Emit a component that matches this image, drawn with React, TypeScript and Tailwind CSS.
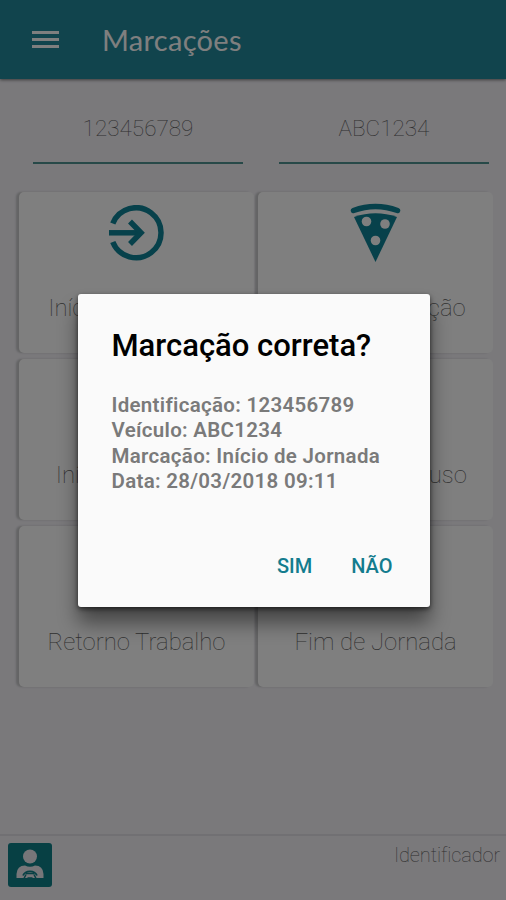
import type { ReactNode } from "react";

function EnterIcon() {
  return (
    <svg width="56" height="56" viewBox="0 0 56 56" fill="none" stroke="#0e8296" strokeWidth="5.5">
      <path d="M3.8 18.5A25 25 0 1 1 3.8 37" />
      <path d="M0 27.8H32" />
      <path d="M21 16.5L32 27.8L21 39" />
    </svg>
  );
}

function PizzaIcon() {
  return (
    <svg width="52" height="60" viewBox="0 0 52 60">
      <path d="M3.5 7.5Q25.500 -0.5 47.500 7.5" fill="none" stroke="#0e8296" strokeWidth="5.5" strokeLinecap="round" />
      <path d="M4 14Q25.500 6.500 47 14L25.500 59Z" fill="#0e8296" />
      <circle cx="16.500" cy="18.500" r="4.800" fill="#fefefe" />
      <circle cx="35" cy="21" r="4.800" fill="#fefefe" />
      <circle cx="25.500" cy="37.500" r="4.800" fill="#fefefe" />
    </svg>
  );
}

function DriverIcon() {
  return (
    <svg width="44" height="44" viewBox="0 0 44 44">
      <rect width="44" height="44" rx="3" fill="#0e8088" />
      <circle cx="22" cy="13.5" r="7" fill="#eeecf2" />
      <path d="M8.5 35V31Q9 22.500 17 22.500Q22 25 27 22.500Q35 22.500 35.500 31V35Z" fill="#eeecf2" />
      <path d="M15 32.500A7.500 6.500 0 0 1 29 32.500" fill="none" stroke="#0e8088" strokeWidth="1.800" />
      <path d="M18 30.500H26M16 35.500L18 31.500M28 35.500L26 31.500M19.500 35H24.500" stroke="#0e8088" strokeWidth="1.500" />
    </svg>
  );
}

type Action = { label: string; icon?: ReactNode };

const actions: Action[] = [
  { label: "Início de Jornada", icon: <EnterIcon /> },
  { label: "Início de Refeição", icon: <PizzaIcon /> },
  { label: "Início de Espera" },
  { label: "Início de Repouso" },
  { label: "Retorno Trabalho" },
  { label: "Fim de Jornada" },
];

function ActionCard({ label, icon }: Action) {
  return (
    <button className="flex h-[161px] flex-col items-center rounded-[5px] bg-[#fefefe] shadow-[-3px_0_2px_#c8c8ca]">
      <span className="flex h-[82px] items-center justify-center">{icon}</span>
      <span className="mt-[18px] text-[23.9px] leading-8 font-thin whitespace-nowrap">{label}</span>
    </button>
  );
}

function Field({ value }: { value: string }) {
  return (
    <div className="flex h-[85px] items-center justify-center border-b-2 border-[#4e9290] pt-[16px] text-[22.5px] font-thin">
      {value}
    </div>
  );
}

export default function App() {
  return (
    <div className="relative h-[900px] w-[506px] overflow-hidden font-['Roboto',sans-serif] text-[#606060]">
      <div className="flex h-full flex-col bg-[#f4f2f7]">
        {/* Top bar */}
        <header className="flex h-[79px] shrink-0 items-center bg-[#22889a] pl-8 shadow-[0_1px_3px_#777]">
          <button aria-label="Menu" className="flex w-[27px] flex-col gap-1">
            <span className="h-[3px] bg-white" />
            <span className="h-[3px] bg-white" />
            <span className="h-[3px] bg-white" />
          </button>
          <h1 className="ml-[43px] font-['Lato',sans-serif] text-[29px] tracking-[0.3px] text-white">Marcações</h1>
        </header>

        <main className="grow">
          <div className="grid grid-cols-2 gap-9 pr-[17px] pl-[33px]">
            <Field value="123456789" />
            <Field value="ABC1234" />
          </div>
          <div className="mt-7 grid grid-cols-2 gap-x-1 gap-y-[6px] pr-[13px] pl-[19px]">
            {actions.map((action) => (
              <ActionCard key={action.label} {...action} />
            ))}
          </div>
        </main>

        {/* Bottom bar */}
        <footer className="flex h-[66px] shrink-0 items-start justify-between border-t-2 border-[#e3e1e6] pt-[7px] pr-[6px] pl-2">
          <DriverIcon />
          <span className="text-[20px] leading-6 font-thin tracking-[-0.1px]">Identificador</span>
        </footer>
      </div>

      {/* Confirmation dialog */}
      <div className="absolute inset-0 flex items-center justify-center bg-black/50">
        <div role="dialog" className="mr-[-1px] flex h-[313px] w-[352px] flex-col rounded-[3px] bg-[#fafafa] pr-[37px] pl-[34px] shadow-[0_16px_20px_rgba(0,0,0,0.45),0_2px_5px_rgba(0,0,0,0.6)]">
          <h2 className="mt-[32px] text-[31px] leading-10 font-medium whitespace-nowrap text-black">Marcação correta?</h2>
          <div className="mt-[27px] text-[20.5px] leading-[25.5px] font-semibold tracking-[0.3px] whitespace-nowrap text-[#7a7a7a]">
            <p>Identificação: 123456789</p>
            <p>Veículo: ABC1234</p>
            <p>Marcação: Início de Jornada</p>
            <p>Data: 28/03/2018 09:11</p>
          </div>
          <div className="mt-[59px] flex justify-end gap-[39px] text-[20px] leading-6 font-medium text-[#137c8e]">
            <button>SIM</button>
            <button>NÃO</button>
          </div>
        </div>
      </div>
    </div>
  );
}
